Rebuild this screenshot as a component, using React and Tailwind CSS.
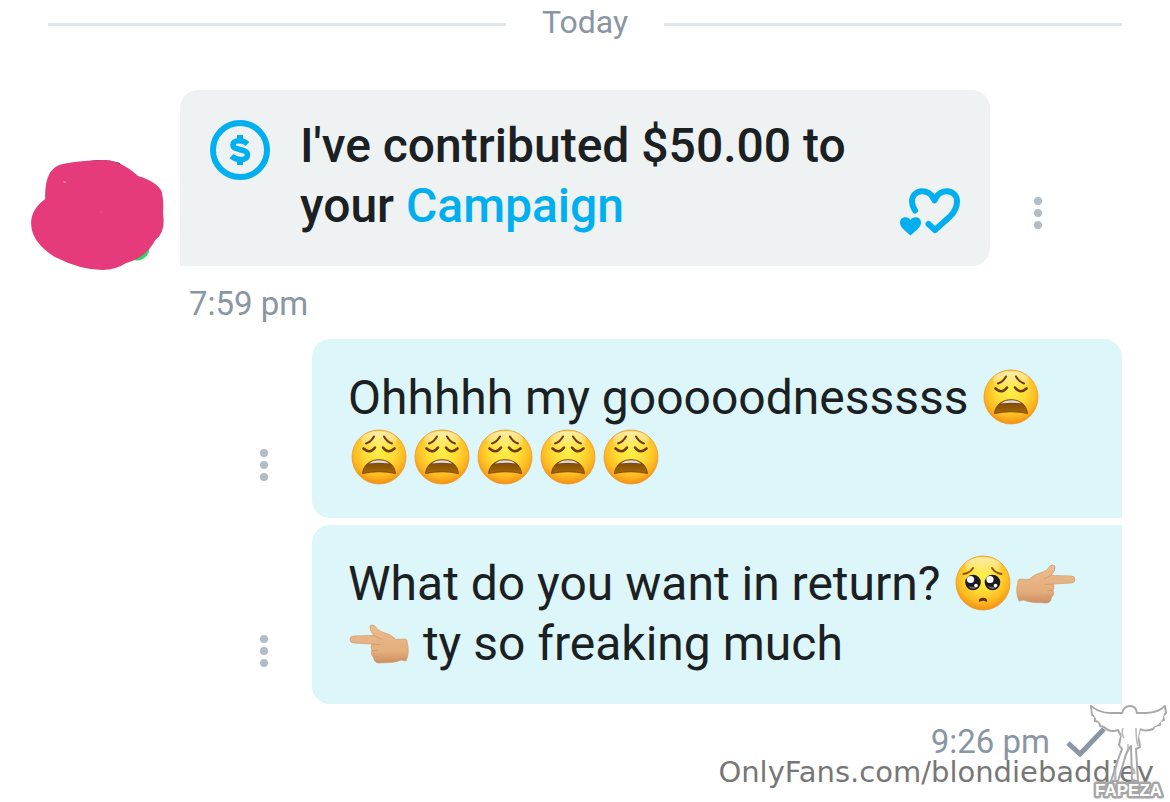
import React from 'react';

// gradients shared by all the emoji drawings
const EmojiDefs = () => (
    <svg width="0" height="0" className="absolute" aria-hidden="true">
        <defs>
            <radialGradient id="face" cx="50%" cy="38%" r="64%">
                <stop offset="0" stopColor="#fff04a" />
                <stop offset="0.45" stopColor="#fedb35" />
                <stop offset="0.75" stopColor="#fdb820" />
                <stop offset="1" stopColor="#f08a12" />
            </radialGradient>
            <linearGradient id="shine" x1="0" y1="0" x2="0" y2="1">
                <stop offset="0" stopColor="#fff" stopOpacity="0.6" />
                <stop offset="1" stopColor="#fff" stopOpacity="0" />
            </linearGradient>
            <linearGradient id="mouth" x1="0" y1="0" x2="0" y2="1">
                <stop offset="0" stopColor="#75400a" />
                <stop offset="1" stopColor="#a96a05" />
            </linearGradient>
            <linearGradient id="skin" x1="0" y1="0" x2="0" y2="1">
                <stop offset="0" stopColor="#edbd8b" />
                <stop offset="0.7" stopColor="#e3ad7c" />
                <stop offset="1" stopColor="#cd8e60" />
            </linearGradient>
        </defs>
    </svg>
);

const Face = ({ label, children }) => (
    <svg role="img" aria-label={label} viewBox="0 0 63 60" className="inline-block h-[60px] w-[63px] align-top">
        <circle cx="31" cy="29" r="27" fill="url(#face)" stroke="#ee9826" strokeWidth="0.8" />
        <ellipse cx="31" cy="12" rx="18" ry="9" fill="url(#shine)" />
        {children}
    </svg>
);

const WearyFace = () => (
    <Face label="weary face">
        <g fill="none" stroke="#6f3c09" strokeLinecap="round">
            <path d="M18 15.500Q23.500 13.500 26 8.500M36 8.500Q38.500 13.500 44 15.500" strokeWidth="2" />
            <path d="M15.500 20.500Q22 26.500 27 19.500M35 19.500Q40 26.500 46.500 20.500" strokeWidth="2.600" />
        </g>
        <path d="M14.500 45.500C16 27 46 27 47.500 45.500Q31 42 14.500 45.500Z" fill="url(#mouth)" stroke="#70400b" strokeWidth="0.8" strokeLinejoin="round" />
        <path d="M21 35.500C25 31 37 31 41 35.500Q31 33.800 21 35.500Z" fill="#dedfe5" />
    </Face>
);

const PleadingFace = () => (
    <Face label="pleading face">
        <path d="M11.500 20Q18 19 21 14M40 14Q43 19 49.500 20" fill="none" stroke="#91550f" strokeWidth="2" strokeLinecap="round" />
        <circle cx="21" cy="28.500" r="7.800" fill="#1c1b1f" />
        <circle cx="40.500" cy="28.500" r="7.800" fill="#1c1b1f" />
        <path d="M16 32Q21 38 26 32Q21 34 16 32ZM35.500 32Q40.500 38 45.500 32Q40.500 34 35.500 32Z" fill="#75706c" />
        <g fill="#fff">
            <circle cx="18.500" cy="25.500" r="3.600" />
            <circle cx="38" cy="25.500" r="3.600" />
            <circle cx="24" cy="31.500" r="1.800" />
            <circle cx="43.500" cy="31.500" r="1.800" />
        </g>
        <path d="M27.500 47C28 43.500 34 43.500 34.500 47Q31 45 27.500 47Z" fill="#5f3208" stroke="#5f3208" strokeWidth="1.500" strokeLinejoin="round" />
    </Face>
);

const Hand = ({ label, flip }) => (
    <svg role="img" aria-label={label} viewBox="0 0 63 60" className="inline-block h-[60px] w-[63px] align-top">
        <g transform={flip ? 'matrix(-1 0 0 1 62 0)' : undefined}>
            <path
                d="M3 28Q2 26 5 25L14 25.500Q19 20 28 18Q33 16 35 12Q38 10 40 12Q41 16 36 21.500L56 22Q60 22 60 25.500Q60 29 56 29L38 30Q40 33 38 36.500Q40 41 36.500 43Q36 49 31 49L20 48.500Q13 48 9 46L4 47Q0 38 3 28Z"
                fill="url(#skin)" stroke="#d29a6b" strokeWidth="0.7" strokeLinejoin="round"
            />
            <path d="M38 30L30 30.500M38 36.500L33 36.500M36.500 43L32 42.500M36 21.500L29 25" fill="none" stroke="#cd976a" strokeWidth="0.8" strokeLinecap="round" />
        </g>
    </svg>
);

const DollarIcon = () => (
    <svg viewBox="0 0 60 60" className="h-[60px] w-[60px] shrink-0" aria-hidden="true">
        <circle cx="30" cy="30" r="27" fill="none" stroke="#00aff0" strokeWidth="6" />
        <path d="M27 15h6v5h-6zM27 39h6v6h-6z" fill="#00aff0" />
        <path d="M37.500 24Q34 20.800 29.500 20.800Q23 20.800 23 25C23 31 37.500 28 37.500 35Q37.500 39.500 30.500 39.500Q25 39.500 21.500 36" fill="none" stroke="#00aff0" strokeWidth="5.500" />
    </svg>
);

const HeartsIcon = () => (
    <svg viewBox="0 0 60 50" className="h-[50px] w-[60px]" aria-hidden="true">
        <path d="M15 24.500Q12 20 12 15.500C12 3.500 29 .5 34.500 14.500C40 .5 57 3.500 57 15.500C57 22.500 54 26.500 50 30.500L35 44L28.500 38" fill="none" stroke="#00aff0" strokeWidth="6" strokeLinecap="round" strokeLinejoin="round" />
        <path d="M10.500 49.500C5 44.500 0 41.500 0 36.500C0 30.500 8 29.500 10.500 34C13 29.500 21 30.500 21 36.500C21 41.500 16 44.500 10.500 49.500Z" fill="#00aff0" />
    </svg>
);

const Avatar = () => (
    <svg role="img" aria-label="Avatar" viewBox="0 0 136 114" className="-mb-1 h-[114px] w-[136px] shrink-0">
        <circle cx="107" cy="92" r="12.500" fill="#2fd566" />
        <path d="M60 5Q75 2 90 7L92 12L60 20Z" fill="#29254f" />
        <path
            d="M15 43Q14 15 28 9Q40 5 68 4Q85 4 101 20Q119 26 123 36Q125 46 124 57Q127 76 117 84Q108 102 90 107Q80 114 68 114Q48 114 24 101Q3 87 2 69Q1 54 15 43Z"
            transform="matrix(1.080 0 0 1 -1 0)"
            fill="#e53b7a"
        />
        <path d="M33 25l4 1-3 1z" fill="#f3a783" />
        <circle cx="71" cy="56" r="1.500" fill="#e84e70" />
    </svg>
);

const MenuButton = () => (
    <button type="button" aria-label="Message options" className="mb-8 flex h-[42px] w-8 shrink-0 items-center justify-center self-end">
        <svg viewBox="0 0 8 32" className="h-8 w-2" fill="#b2bcc7" aria-hidden="true">
            <circle cx="4" cy="4" r="4" />
            <circle cx="4" cy="16" r="4" />
            <circle cx="4" cy="28" r="4" />
        </svg>
    </button>
);

const SentMessage = ({ last, children }) => (
    <div className="flex justify-end gap-8 pr-12">
        <MenuButton />
        <div className={`w-[810px] rounded-l-[18px] bg-[#dcf6fa] px-9 pt-[29px] pb-[30px] text-[48px] leading-[60px] text-[#1b2022] ${last ? '' : 'rounded-tr-[18px]'}`}>
            {children}
        </div>
    </div>
);

const Watermark = () => (
    <div className="absolute right-0 bottom-0 text-[29px] leading-9 text-[#777777]">
        <p className="pr-4 pb-3 font-['DejaVu_Sans',sans-serif]">OnlyFans.com/blondiebaddiey</p>
        <svg role="img" aria-label="FAPEZA" viewBox="0 0 84 102" className="absolute right-0 bottom-0 h-[102px] w-[84px]">
            <path
                d="M5 6Q14 14 27 13L36 13Q38 6 44 6Q50 6 51 13L60 13Q72 13 79 6L80 13L77 16L78 20L74 21L74 25L69 26L67 29Q59 32 54 29L52 37Q54 43 54 47L50 49L52 81H46L45 46Q40 52 38 61L32 81H25L33 57L36 49L33 45L35 36L32 30Q24 33 18 27L14 26L13 22L9 21L9 17L6 15Z"
                fill="#fff" fillOpacity="0.5" stroke="#a8a8a8" strokeWidth="2" strokeLinejoin="round"
            />
            <path d="M6 8Q14 14 27 14H60Q72 14 78 8Q79 23 67 27L54 28L51 42H36L35 29L20 27Q7 20 6 8Z" fill="#fff" />
            <path d="M37 28Q35 34 38 38M50 28Q50 40 52 46M42 44V50" fill="none" stroke="#b5b5b5" strokeWidth="1.500" />
            <text x="9" y="96" fontFamily="Liberation Sans, sans-serif" fontSize="17" fontWeight="700" fill="#fff" stroke="#a6a6a6" strokeWidth="5" strokeLinejoin="round" paintOrder="stroke">FAPEZA</text>
        </svg>
    </div>
);

const App = () => {
    return (
        <main className="relative min-h-screen overflow-hidden bg-white font-[Roboto,sans-serif]">
            <EmojiDefs />

            <div className="flex items-center gap-9 px-12 pt-1 text-[32px] leading-9 text-[#8a96a3]">
                <div className="mt-1 h-[3px] flex-1 bg-[#dfe5e8]" />
                <h2>Today</h2>
                <div className="mt-1 h-[3px] flex-1 bg-[#dfe5e8]" />
            </div>

            <section className="mt-[50px] flex pl-[30px]">
                <div className="flex shrink-0 items-end">
                    <Avatar />
                </div>
                <div className="ml-[14px] flex w-[810px] gap-[30px] rounded-[18px] rounded-bl-none bg-[#eef2f3] px-[30px] pt-[26px] pb-[30px]">
                    <div className="pt-1">
                        <DollarIcon />
                    </div>
                    <p className="flex-1 text-[48px] leading-[60px] font-medium text-[#1b2022]">
                        I've contributed $50.00 to your <a href="#campaign" className="text-[#00aff0]">Campaign</a>
                    </p>
                    <button type="button" aria-label="Like" className="self-end">
                        <HeartsIcon />
                    </button>
                </div>
                <div className="ml-8 flex">
                    <MenuButton />
                </div>
            </section>
            <time className="block pt-5 pl-[189px] text-[33px] leading-9 text-[#8a96a3]">7:59 pm</time>

            <section className="mt-[17px] flex flex-col gap-[7px]">
                <SentMessage>
                    Ohhhhh my gooooodnesssss <WearyFace /><WearyFace /><WearyFace /><WearyFace /><WearyFace /><WearyFace />
                </SentMessage>
                <SentMessage last>
                    What do you want in return? <PleadingFace /><Hand label="pointing right" /><Hand label="pointing left" flip /> ty so freaking much
                </SentMessage>
            </section>

            <div className="flex items-center justify-end gap-4 pt-5 pr-16 text-[33px] leading-9 text-[#8a96a3]">
                <time>9:26 pm</time>
                <svg viewBox="0 0 40 30" className="h-[30px] w-10" aria-label="Sent" role="img">
                    <path d="M2 16L14 27L38 2" fill="none" stroke="#8a96a3" strokeWidth="5" />
                </svg>
            </div>

            <Watermark />
        </main>
    );
};

export default App;
